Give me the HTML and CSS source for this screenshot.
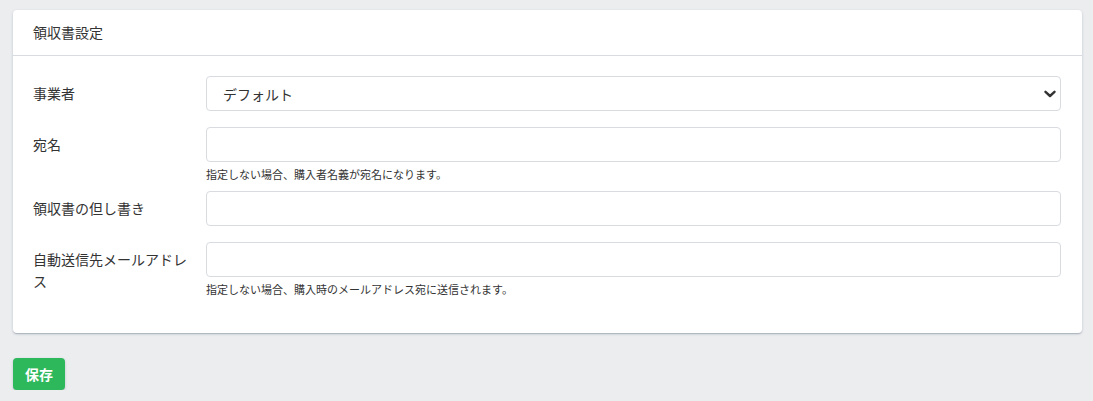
FILE: index.html
```html
<!DOCTYPE html>
<html lang="ja">
<head>
<meta charset="utf-8">
<title>領収書設定</title>
<link rel="stylesheet" href="styles.css">
</head>
<body>
<div class="page">
  <section class="card">
    <header class="card-header">領収書設定</header>
    <div class="card-body">
      <div class="field">
        <label class="label">事業者</label>
        <div class="control">
          <div class="select-wrap">
            <select class="input select">
              <option>デフォルト</option>
            </select>
            <svg class="chevron" width="12" height="8" viewBox="0 0 12 8"><path d="M1.5 1.8 L6 6 L10.5 1.8" fill="none" stroke="#333" stroke-width="2.4" stroke-linecap="round" stroke-linejoin="round"/></svg>
          </div>
        </div>
      </div>
      <div class="field has-help">
        <label class="label">宛名</label>
        <div class="control">
          <input class="input" type="text">
          <p class="help">指定しない場合、購入者名義が宛名になります。</p>
        </div>
      </div>
      <div class="field">
        <label class="label">領収書の但し書き</label>
        <div class="control">
          <input class="input" type="text">
        </div>
      </div>
      <div class="field last">
        <label class="label">自動送信先メールアドレス</label>
        <div class="control">
          <input class="input" type="text">
          <p class="help">指定しない場合、購入時のメールアドレス宛に送信されます。</p>
        </div>
      </div>
    </div>
  </section>
  <button class="btn-save" type="button">保存</button>
</div>
</body>
</html>
```
FILE: styles.css
```css
html, body {
  margin: 0;
  padding: 0;
  background: #ebedef;
}
body {
  font-family: "Noto Sans CJK JP", "Noto Sans", sans-serif;
  color: #333;
  font-size: 14px;
}
.page {
  padding: 10px 11px 0 13px;
}
.card {
  background: #fff;
  border-radius: 4px;
  box-shadow: 0 1px 1px 0 rgba(60, 75, 100, 0.14), 0 2px 1px -1px rgba(60, 75, 100, 0.12), 0 1px 3px 0 rgba(60, 75, 100, 0.2);
}
.card-header {
  padding: 12px 20px;
  line-height: 21px;
  border-bottom: 1px solid #d8dbe0;
}
.card-body {
  padding: 20px 21px 21px 20px;
}
.field {
  display: grid;
  grid-template-columns: 173px 1fr;
  margin-bottom: 16px;
}
.field.has-help {
  margin-bottom: 10px;
}
.field.last {
  margin-bottom: 16px;
}
.label {
  padding: 6px 10px 0 0;
  line-height: 22px;
}
.control {
  min-width: 0;
}
.input {
  display: block;
  box-sizing: border-box;
  width: 100%;
  height: 35px;
  margin: 0;
  padding: 0 16px;
  border: 1px solid #d8dbe0;
  border-radius: 4px;
  background: #fff;
  font: inherit;
  color: #333;
  outline: none;
}
.select-wrap {
  position: relative;
}
.select {
  appearance: none;
  -webkit-appearance: none;
  padding-left: 16px;
}
.chevron {
  position: absolute;
  right: 5px;
  top: 14px;
  pointer-events: none;
}
.help {
  margin: 5px 0 0;
  font-size: 11px;
  line-height: 14px;
}
.btn-save {
  margin-top: 25px;
  padding: 6px 12px;
  border: 0;
  border-radius: 4px;
  background: #2eb85c;
  color: #fff;
  font-family: inherit;
  font-size: 14px;
  font-weight: 700;
  line-height: 20px;
  box-shadow: 0 1px 1px 0 rgba(60, 75, 100, 0.14), 0 1px 3px 0 rgba(60, 75, 100, 0.2);
}
```
